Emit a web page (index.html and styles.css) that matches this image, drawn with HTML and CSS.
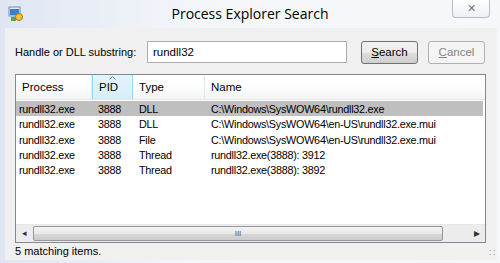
FILE: index.html
```html
<!DOCTYPE html>
<html lang="en">
<head>
    <meta charset="UTF-8">
    <title>Process Explorer Search</title>
    <link rel="stylesheet" href="styles.css">
</head>
<body>
    <div class="window">
        <div class="titlebar">
            <svg class="app-icon" width="16" height="16" viewBox="0 0 16 16">
                <rect x="1" y="1" width="11" height="9" fill="#dfe9f5" stroke="#6b8fb8"/>
                <rect x="2" y="3" width="9" height="6" fill="#3b7fd0"/>
                <circle cx="11" cy="11" r="3.5" fill="#f3c338" stroke="#a77a10"/>
                <rect x="3" y="11" width="5" height="4" fill="#5aa845"/>
            </svg>
            <div class="title">Process Explorer Search</div>
            <div class="close">&#x2715;</div>
        </div>
        <div class="client">
            <div class="search-row">
                <label class="label">Handle or DLL substring:</label>
                <div class="input">rundll32</div>
                <button class="button"><u>S</u>earch</button>
                <button class="button disabled"><u>C</u>ancel</button>
            </div>
            <div class="list">
                <div class="list-head">
                    <div class="col c-proc">Process</div>
                    <div class="col c-pid sorted">PID
                        <svg class="sort" width="7" height="4" viewBox="0 0 7 4"><path d="M0.5 3.5 L3.5 0.5 L6.5 3.5" fill="none" stroke="#6f8aa3"/></svg>
                    </div>
                    <div class="col c-type">Type</div>
                    <div class="col c-name">Name</div>
                </div>
                <div class="rows">
                    <div class="row selected">
                        <div class="c-proc">rundll32.exe</div><div class="c-pid">3888</div><div class="c-type">DLL</div><div class="c-name">C:\Windows\SysWOW64\rundll32.exe</div>
                    </div>
                    <div class="row">
                        <div class="c-proc">rundll32.exe</div><div class="c-pid">3888</div><div class="c-type">DLL</div><div class="c-name">C:\Windows\SysWOW64\en-US\rundll32.exe.mui</div>
                    </div>
                    <div class="row">
                        <div class="c-proc">rundll32.exe</div><div class="c-pid">3888</div><div class="c-type">File</div><div class="c-name">C:\Windows\SysWOW64\en-US\rundll32.exe.mui</div>
                    </div>
                    <div class="row">
                        <div class="c-proc">rundll32.exe</div><div class="c-pid">3888</div><div class="c-type">Thread</div><div class="c-name">rundll32.exe(3888): 3912</div>
                    </div>
                    <div class="row">
                        <div class="c-proc">rundll32.exe</div><div class="c-pid">3888</div><div class="c-type">Thread</div><div class="c-name">rundll32.exe(3888): 3892</div>
                    </div>
                </div>
                <div class="hscroll">
                    <div class="arrow">&#x25C2;</div>
                    <div class="thumb"><span class="grip">III</span></div>
                    <div class="arrow right">&#x25B8;</div>
                </div>
            </div>
            <div class="status">
                <span>5 matching items.</span>
                <span class="sizegrip">&#x2237;</span>
            </div>
        </div>
    </div>
</body>
</html>
```

FILE: styles.css
```css
body {
    margin: 0;
    width: 500px;
    height: 263px;
    overflow: hidden;
    font-family: "Liberation Sans", Arial, sans-serif;
    font-size: 11px;
    color: #000;
    background: linear-gradient(90deg, #dfe6f2 0%, #f4f6fa 40%, #f6f7fa 100%);
}
.window {
    height: 263px;
    display: flex;
    flex-direction: column;
    padding: 0 3px 3px 5px;
    box-sizing: border-box;
}
.titlebar {
    height: 28px;
    display: flex;
    align-items: flex-start;
    flex-shrink: 0;
}
.app-icon {
    margin: 6px 0 0 3px;
}
.title {
    flex: 1;
    text-align: center;
    font-family: "Open Sans", "Noto Sans", sans-serif;
    font-size: 14px;
    padding-top: 4px;
    padding-left: 24px;
}
.close {
    width: 36px;
    height: 17px;
    margin-right: 7px;
    border: 1px solid #b8bcc4;
    border-top: none;
    border-radius: 0 0 4px 4px;
    background: linear-gradient(#ffffff, #eef0f4);
    color: #6d7480;
    font-size: 11px;
    text-align: center;
    line-height: 16px;
}
.client {
    flex: 1;
    background: #f0f0f0;
    display: flex;
    flex-direction: column;
    padding: 13px 11px 0 10px;
    font-family: "Liberation Sans", Arial, sans-serif;
    font-size: 11px;
}
.search-row {
    display: flex;
    align-items: center;
    height: 22px;
}
.label {
    width: 132px;
    white-space: nowrap;
}
.input {
    width: 193px;
    height: 20px;
    border: 1px solid #abadb3;
    background: #fff;
    line-height: 20px;
    padding-left: 5px;
    margin-right: 14px;
    font-size: 11.5px;
}
.button {
    width: 57px;
    height: 23px;
    margin-right: 10px;
    font-family: "Liberation Sans", Arial, sans-serif;
    font-size: 11.5px;
    color: #000;
    border: 1px solid #707070;
    border-radius: 3px;
    background: linear-gradient(#f2f2f2 0%, #ebebeb 50%, #dddddd 51%, #cfcfcf 100%);
    padding: 0;
}
.button.disabled {
    color: #838383;
    border-color: #adb2b5;
    background: #f4f4f4;
    margin-right: 0;
}
.list {
    margin-top: 11px;
    height: 167px;
    border: 1px solid #828790;
    background: #fff;
    display: flex;
    flex-direction: column;
}
.list-head {
    display: flex;
    height: 24px;
    background: linear-gradient(#ffffff 0%, #ffffff 40%, #f3f4f6 100%);
    font-size: 11.5px;
    border-bottom: 1px solid #e5e5e5;
    flex-shrink: 0;
}
.col {
    line-height: 25px;
    padding-left: 6px;
    box-sizing: border-box;
    border-right: 1px solid #e3e8ee;
    position: relative;
}
.col.sorted {
    background: linear-gradient(#e3f4fc 0%, #d6eefb 100%);
    border-left: 1px solid #96d9f9;
    border-right: 1px solid #96d9f9;
}
.sort {
    position: absolute;
    top: 1px;
    left: 16px;
}
.c-proc { width: 76px; }
.c-pid { width: 41px; }
.c-type { width: 72px; }
.c-name { flex: 1; border-right: none; }
.rows {
    flex: 1;
    padding-top: 1px;
}
.row {
    display: flex;
    height: 15.3px;
    line-height: 16px;
    padding-left: 3px;
    margin-right: 2px;
    font-size: 10.8px;
    letter-spacing: -0.25px;
}
.row div {
    white-space: nowrap;
}
.row .c-proc { width: 79px; }
.row .c-pid { width: 41px; }
.row .c-type { width: 72px; }
.row.selected {
    background: #bfbfbf;
}
.hscroll {
    height: 17px;
    display: flex;
    background: #ececec;
    border-top: 1px solid #e8e8e8;
    flex-shrink: 0;
}
.arrow {
    width: 17px;
    text-align: center;
    font-size: 9px;
    line-height: 17px;
    color: #333;
}
.thumb {
    width: 410px;
    margin: 1px 0;
    border: 1px solid #979797;
    border-radius: 2px;
    background: linear-gradient(#f3f3f3 0%, #e8e8e8 50%, #d8d8d8 51%, #cbcbcb 100%);
    text-align: center;
    font-size: 8px;
    line-height: 14px;
    color: #555;
    box-sizing: border-box;
}
.arrow.right {
    flex: 1;
    text-align: right;
    padding-right: 5px;
    font-size: 12px;
}
.status {
    flex: 1;
    display: flex;
    justify-content: space-between;
    align-items: center;
    padding-bottom: 2px;
}
.sizegrip {
    color: #a0a0a0;
    font-size: 10px;
    align-self: flex-end;
    margin-right: -9px;
}
```
